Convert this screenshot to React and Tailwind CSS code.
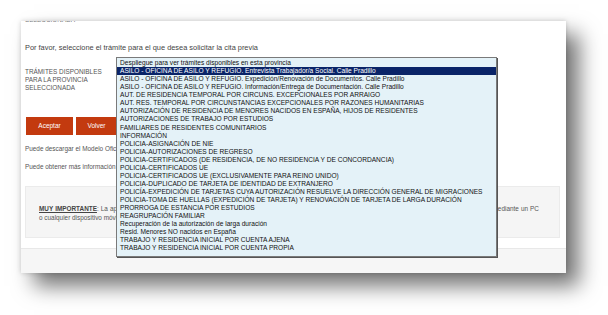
import React from "react";

const options = [
  "ASILO - OFICINA DE ASILO Y REFUGIO. Entrevista Trabajador/a Social. Calle Pradillo",
  "ASILO - OFICINA DE ASILO Y REFUGIO. Expedición/Renovación de Documentos. Calle Pradillo",
  "ASILO - OFICINA DE ASILO Y REFUGIO. Información/Entrega de Documentación. Calle Pradillo",
  "AUT. DE RESIDENCIA TEMPORAL POR CIRCUNS. EXCEPCIONALES POR ARRAIGO",
  "AUT. RES. TEMPORAL POR CIRCUNSTANCIAS EXCEPCIONALES POR RAZONES HUMANITARIAS",
  "AUTORIZACIÓN DE RESIDENCIA DE MENORES NACIDOS EN ESPAÑA, HIJOS DE RESIDENTES",
  "AUTORIZACIONES DE TRABAJO POR ESTUDIOS",
  "FAMILIARES DE RESIDENTES COMUNITARIOS",
  "INFORMACIÓN",
  "POLICIA-ASIGNACIÓN DE NIE",
  "POLICIA-AUTORIZACIONES DE REGRESO",
  "POLICIA-CERTIFICADOS (DE RESIDENCIA, DE NO RESIDENCIA Y DE CONCORDANCIA)",
  "POLICIA-CERTIFICADOS UE",
  "POLICIA-CERTIFICADOS UE (EXCLUSIVAMENTE PARA REINO UNIDO)",
  "POLICIA-DUPLICADO DE TARJETA DE IDENTIDAD DE EXTRANJERO",
  "POLICÍA-EXPEDICIÓN DE TARJETAS CUYA AUTORIZACIÓN RESUELVE LA DIRECCIÓN GENERAL DE MIGRACIONES",
  "POLICIA-TOMA DE HUELLAS (EXPEDICIÓN DE TARJETA) Y RENOVACIÓN DE TARJETA DE LARGA DURACIÓN",
  "PRORROGA DE ESTANCIA POR ESTUDIOS",
  "REAGRUPACIÓN FAMILIAR",
  "Recuperación de la autorización de larga duración",
  "Resid. Menores NO nacidos en España",
  "TRABAJO Y RESIDENCIA INICIAL POR CUENTA AJENA",
  "TRABAJO Y RESIDENCIA INICIAL POR CUENTA PROPIA",
];

export default function App() {
  return (
    <div
      className="w-[608px] h-[315px] bg-white pt-[21px] pl-[21px] overflow-hidden"
      style={{ fontFamily: '"Liberation Sans", Arial, sans-serif' }}
    >
      <div className="relative w-[545px] h-[252px] bg-white overflow-hidden shadow-[13px_13px_20px_rgba(0,0,0,0.55),0_0_5px_rgba(0,0,0,0.18)]">
        <div className="px-[4px]">
          <div className="h-[3px] overflow-hidden">
            <p className="-mt-[5px] text-[6.4px] leading-[8px] text-[#777]">SELECCIONADA</p>
          </div>
          <p className="mt-[18.5px] text-[7.4px] leading-[9px] text-[#444]">
            Por favor, seleccione el trámite para el que desea solicitar la cita previa
          </p>
          <div className="mt-[16px] text-[6.4px] leading-[8px] text-[#555]">
            <p>TRÁMITES DISPONIBLES</p>
            <p>PARA LA PROVINCIA</p>
            <p>SELECCIONADA</p>
          </div>
          <div className="mt-[25.5px] flex gap-[3px] pl-[1px]">
            <button className="w-[47px] h-[18px] bg-[#c33a0f] text-white text-[6.5px]">Aceptar</button>
            <button className="w-[41px] h-[18px] bg-[#c33a0f] text-white text-[6.5px]">Volver</button>
          </div>
          <p className="mt-[8.5px] text-[6.4px] leading-[9px] text-[#555]">
            Puede descargar el Modelo Oficial de solicitud desde esta misma página
          </p>
          <p className="mt-[9px] text-[6.4px] leading-[9px] text-[#555]">
            Puede obtener más información sobre los trámites en la web del Ministerio
          </p>
          <div className="mt-[15.5px] w-[535px] h-[52px] bg-[#f5f5f5] border border-[#ebebeb] pl-[13px] pt-[16.5px] text-[6.4px] leading-[9px] text-[#555]">
            <span className="block w-[500px] whitespace-nowrap text-justify [text-align-last:justify]">
              <b className="underline text-[#444]">MUY IMPORTANTE</b>: La aplicación de cita previa funciona correctamente en los navegadores más habituales y actualizados, por lo que puede acceder a ella mediante un PC
            </span>
            <span className="block">o cualquier dispositivo móvil con conexión a Internet.</span>
          </div>
        </div>
        <div className="mt-[10px] h-[25px] bg-[#f6f6f6] border-t border-[#e8e8e8]"></div>

        <div className="absolute left-[95px] top-[36px] w-[381px] h-[200px] bg-[#e4f2f8] border border-[#7a7a7a] shadow-[1px_1px_0_#555] pt-[1px] text-[6.6px] text-[#111]">
          <div className="h-[8.07px] leading-[8.07px] px-[3px] whitespace-nowrap">
            Despliegue para ver trámites disponibles en esta provincia
          </div>
          {options.map((o, i) => (
            <div
              key={i}
              className={
                i === 0
                  ? "h-[8.07px] leading-[8.07px] px-[3px] whitespace-nowrap bg-[#0a2468] text-white"
                  : "h-[8.07px] leading-[8.07px] px-[3px] whitespace-nowrap"
              }
            >
              {o}
            </div>
          ))}
        </div>
      </div>
    </div>
  );
}
